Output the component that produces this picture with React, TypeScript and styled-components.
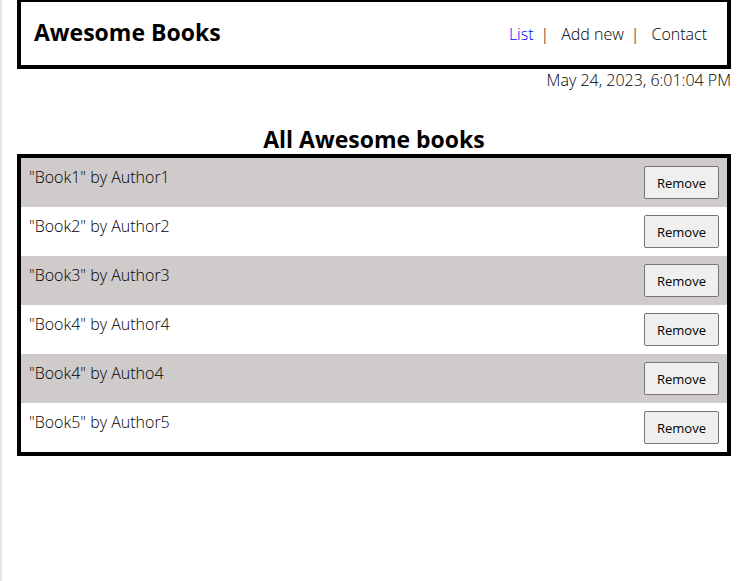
import React, { useState } from "react";
import styled, { createGlobalStyle } from "styled-components";

const GlobalStyle = createGlobalStyle`
  *, *::before, *::after { box-sizing: border-box; }
  body {
    margin: 0;
    color: #000;
    background: #fff;
    font-family: "Segoe UI", "Open Sans", "Noto Sans", sans-serif;
    font-size: 16px;
    font-weight: 300;
    line-height: 22px;
  }
  h1, h2, p, ul { margin: 0; padding: 0; }
  ul { list-style: none; }
`;

const Page = styled.div`
  min-height: 100vh;
  padding: 0 13px 0 15px;
  border-left: 2px solid #e4e4e4;
`;

const Header = styled.header`
  display: flex;
  align-items: flex-start;
  justify-content: space-between;
  padding: 14px 20px 17px 13px;
  border: 4px solid #000;
  border-top-width: 2px;
`;

const Brand = styled.h1`
  font-size: 23px;
  line-height: 32px;
  font-weight: 700;
`;

const Nav = styled.nav`
  padding-top: 7px;
`;

const NavList = styled.ul`
  display: flex;
`;

const NavItem = styled.li`
  display: flex;
  & + &::before {
    content: "|";
    margin: 0 12px 0 7px;
  }
`;

const NavLink = styled.a<{ $active?: boolean }>`
  color: ${({ $active }) => ($active ? "#0000ff" : "#000")};
  text-decoration: none;
`;

const Clock = styled.p`
  text-align: right;
`;

const Title = styled.h2`
  margin-top: 34px;
  font-size: 23px;
  line-height: 29px;
  font-weight: 700;
  text-align: center;
`;

const BookList = styled.ul`
  border: 4px solid #000;
`;

const BookRow = styled.li`
  display: flex;
  align-items: flex-start;
  justify-content: space-between;
  padding: 8px;
  &:nth-child(odd) { background: #cfcbcb; }
`;

const RemoveButton = styled.button`
  width: 75px;
  height: 33px;
  padding: 0;
  border: 1px solid #767676;
  border-radius: 2px;
  color: #000;
  background: #efefef;
  font: 13px/18px "Segoe UI", "Open Sans", "Noto Sans", sans-serif;
  cursor: pointer;
`;

const initialBooks = [
  { id: 1, title: "Book1", author: "Author1" },
  { id: 2, title: "Book2", author: "Author2" },
  { id: 3, title: "Book3", author: "Author3" },
  { id: 4, title: "Book4", author: "Author4" },
  { id: 5, title: "Book4", author: "Autho4" },
  { id: 6, title: "Book5", author: "Author5" },
];

export default function App() {
  const [books, setBooks] = useState(initialBooks);
  return (
    <>
      <GlobalStyle />
      <Page>
        <Header>
          <Brand>Awesome Books</Brand>
          <Nav>
            <NavList>
              <NavItem><NavLink href="#list" $active>List</NavLink></NavItem>
              <NavItem><NavLink href="#add">Add new</NavLink></NavItem>
              <NavItem><NavLink href="#contact">Contact</NavLink></NavItem>
            </NavList>
          </Nav>
        </Header>
        <main>
          <Clock>May 24, 2023, 6:01:04 PM</Clock>
          <Title>All Awesome books</Title>
          <BookList>
            {books.map((book) => (
              <BookRow key={book.id}>
                <p>"{book.title}" by {book.author}</p>
                <RemoveButton
                  type="button"
                  onClick={() => setBooks(books.filter(({ id }) => id !== book.id))}
                >
                  Remove
                </RemoveButton>
              </BookRow>
            ))}
          </BookList>
        </main>
      </Page>
    </>
  );
}
